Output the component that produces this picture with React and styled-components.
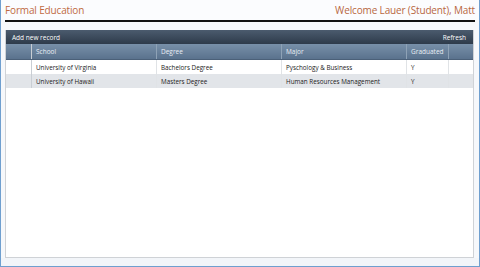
import React from 'react';
import styled, { createGlobalStyle } from 'styled-components';

const GlobalStyle = createGlobalStyle`
  html, body { margin: 0; padding: 0; }
  body { font-family: "Open Sans", "DejaVu Sans", sans-serif; }
`;

const columns = [
  { key: 'school', title: 'School', width: 125 },
  { key: 'degree', title: 'Degree', width: 125 },
  { key: 'major', title: 'Major', width: 125 },
  { key: 'graduated', title: 'Graduated', width: 42 },
];

const records = [
  { school: 'University of Virginia', degree: 'Bachelors Degree', major: 'Pyschology & Business', graduated: 'Y' },
  { school: 'University of Hawaii', degree: 'Masters Degree', major: 'Human Resources Management', graduated: 'Y' },
];

const App = () => {
  return (
    <Page>
      <GlobalStyle />
      <Header>
        <Title>Formal Education</Title>
        <Welcome>Welcome Lauer (Student), Matt</Welcome>
      </Header>
      <Rule />
      <Grid>
        <Toolbar>
          <ToolButton>Add new record</ToolButton>
          <ToolButton>Refresh</ToolButton>
        </Toolbar>
        <HeadRow>
          <IndentCell />
          {columns.map(c => (
            <HeadCell key={c.key} style={{ width: c.width }}>{c.title}</HeadCell>
          ))}
          <FillCell />
        </HeadRow>
        {records.map((r, i) => (
          <Row key={i} $alt={i % 2 === 1}>
            <IndentCell />
            {columns.map(c => (
              <Cell key={c.key} style={{ width: c.width }}>{r[c.key]}</Cell>
            ))}
            <FillCell />
          </Row>
        ))}
        <Empty />
      </Grid>
      <Footer />
    </Page>
  );
};

export default App;

const Page = styled.div`
  width: 480px;
  height: 267px;
  box-sizing: border-box;
  border: 1px solid #6f9fcf;
  border-top: none;
  background: #f6f8fb;
  display: flex;
  flex-direction: column;
  overflow: hidden;
`;

const Header = styled.div`
  display: flex;
  justify-content: space-between;
  align-items: center;
  height: 20px;
  padding: 0 4px 0 4px;
  background: #fbfcfe;
`;

const Title = styled.h1`
  margin: 0;
  font-size: 10px;
  letter-spacing: -0.15px;
  font-weight: normal;
  color: #c06a3e;
`;

const Welcome = styled.div`
  font-size: 10px;
  letter-spacing: -0.15px;
  color: #b8673e;
`;

const Rule = styled.div`
  height: 2px;
  margin: 0 4px 0 4px;
  background: #111;
`;

const Grid = styled.div`
  margin: 8px 5px 0 4px;
  flex: 1;
  display: flex;
  flex-direction: column;
  background: #fff;
  border: 1px solid #cfd2d6;
  border-top: none;
`;

const Toolbar = styled.div`
  height: 14px;
  display: flex;
  justify-content: space-between;
  align-items: center;
  padding: 0 7px 0 6px;
  background: linear-gradient(#4b5b6e, #2e3b4b);
`;

const ToolButton = styled.span`
  font-size: 6.5px;
  color: #fff;
`;

const HeadRow = styled.div`
  height: 15px;
  display: flex;
  background: linear-gradient(#7890a9, #5a728d);
  border-bottom: 1px solid #4b6078;
`;

const IndentCell = styled.div`
  width: 26px;
  flex-shrink: 0;
  border-right: 1px solid #c9ced4;
  box-sizing: border-box;
`;

const HeadCell = styled.div`
  box-sizing: border-box;
  flex-shrink: 0;
  padding-left: 4px;
  font-size: 6.5px;
  color: #e8eef5;
  display: flex;
  align-items: center;
  border-right: 1px solid #8ea2b6;
`;

const FillCell = styled.div`
  flex: 1;
`;

const Row = styled.div`
  height: 14px;
  display: flex;
  background: ${p => (p.$alt ? '#e2e5e9' : '#fff')};
`;

const Cell = styled.div`
  box-sizing: border-box;
  flex-shrink: 0;
  padding-left: 4px;
  font-size: 6.3px;
  color: #222;
  display: flex;
  align-items: center;
  border-right: 1px solid #e0e3e6;
`;

const Empty = styled.div`
  flex: 1;
`;

const Footer = styled.div`
  height: 8px;
  background: #f2f5f9;
`;
